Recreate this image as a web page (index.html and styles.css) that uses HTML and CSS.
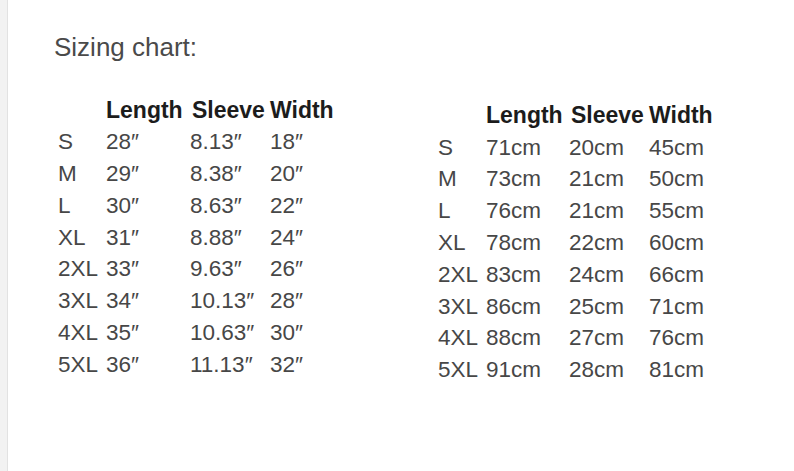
FILE: index.html
```html
<!DOCTYPE html>
<html>
<head>
<meta charset="utf-8">
<link rel="stylesheet" href="styles.css">
</head>
<body>
<div class="page">
  <div class="strip"></div>
  <div class="content">
    <div class="title">Sizing chart:</div>
    <div class="tables">
      <div class="chart chart-in">
        <span></span><span class="hd">Length</span><span class="hd hd-sl">Sleeve</span><span class="hd">Width</span>
        <span>S</span><span>28″</span><span>8.13″</span><span>18″</span>
        <span>M</span><span>29″</span><span>8.38″</span><span>20″</span>
        <span>L</span><span>30″</span><span>8.63″</span><span>22″</span>
        <span>XL</span><span>31″</span><span>8.88″</span><span>24″</span>
        <span>2XL</span><span>33″</span><span>9.63″</span><span>26″</span>
        <span>3XL</span><span>34″</span><span>10.13″</span><span>28″</span>
        <span>4XL</span><span>35″</span><span>10.63″</span><span>30″</span>
        <span>5XL</span><span>36″</span><span>11.13″</span><span>32″</span>
      </div>
      <div class="chart chart-cm">
        <span></span><span class="hd">Length</span><span class="hd hd-sl">Sleeve</span><span class="hd">Width</span>
        <span>S</span><span>71cm</span><span>20cm</span><span>45cm</span>
        <span>M</span><span>73cm</span><span>21cm</span><span>50cm</span>
        <span>L</span><span>76cm</span><span>21cm</span><span>55cm</span>
        <span>XL</span><span>78cm</span><span>22cm</span><span>60cm</span>
        <span>2XL</span><span>83cm</span><span>24cm</span><span>66cm</span>
        <span>3XL</span><span>86cm</span><span>25cm</span><span>71cm</span>
        <span>4XL</span><span>88cm</span><span>27cm</span><span>76cm</span>
        <span>5XL</span><span>91cm</span><span>28cm</span><span>81cm</span>
      </div>
    </div>
  </div>
</div>
</body>
</html>
```

FILE: styles.css
```css
html, body {
  margin: 0;
  padding: 0;
  background: #ffffff;
}
body {
  width: 794px;
  height: 471px;
  overflow: hidden;
  font-family: "Liberation Sans", Arial, sans-serif;
}
.page {
  display: flex;
  height: 471px;
}
.strip {
  width: 7px;
  flex: none;
  background: #f2f2f2;
  border-right: 1px solid #e2e2e2;
}
.content {
  flex: 1;
  padding: 32px 0 0 46px;
}
.title {
  font-size: 26px;
  line-height: 30px;
  color: #4a4a4a;
}
.tables {
  display: flex;
  align-items: flex-start;
  padding-left: 4px;
  margin-top: 32.5px;
}
.chart {
  display: grid;
  font-size: 22.5px;
  line-height: 31.8px;
  color: #474747;
  white-space: nowrap;
}
.chart-in {
  grid-template-columns: 48px 84px 80px 80px;
}
.chart-cm {
  grid-template-columns: 48px 83px 80px 80px;
  margin-left: 88px;
  margin-top: 5.3px;
}
.hd {
  font-weight: bold;
  font-size: 23px;
  color: #1c1c1c;
}
.hd-sl {
  padding-left: 2px;
}
```
